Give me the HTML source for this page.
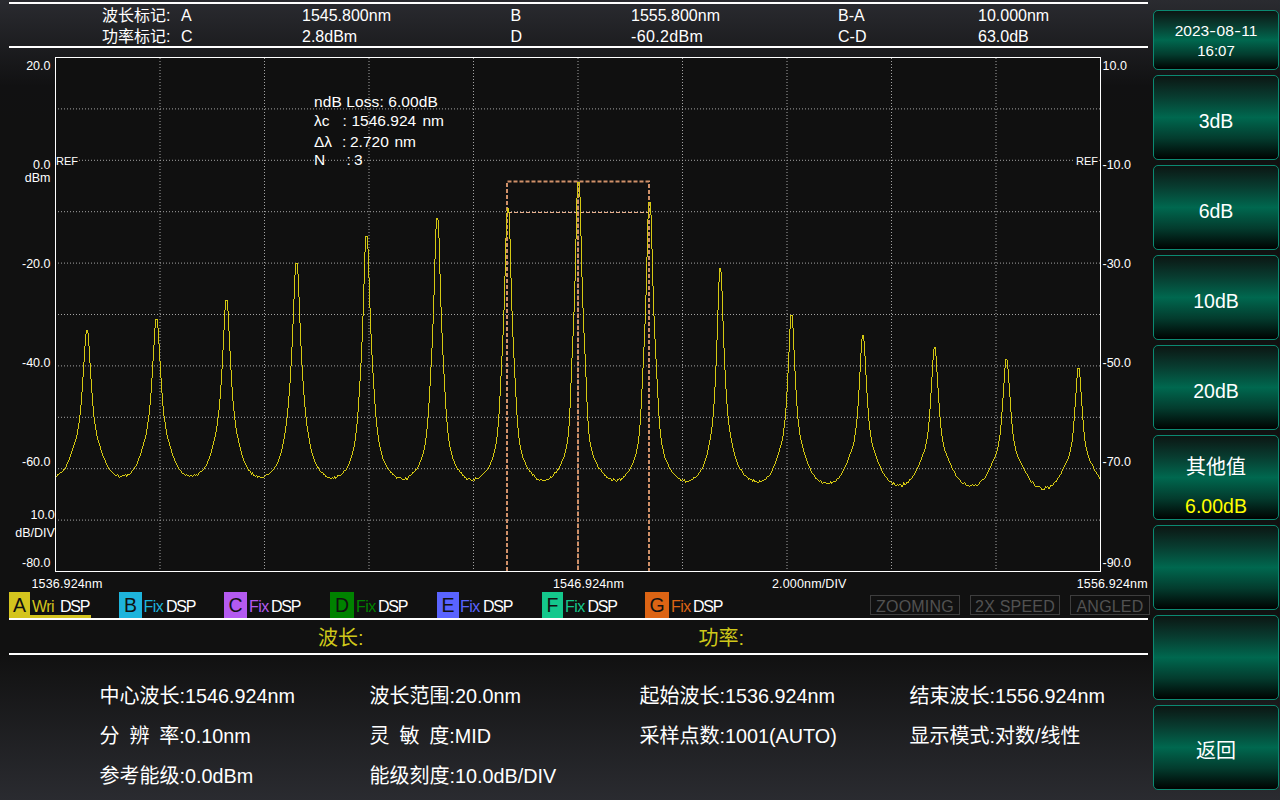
<!DOCTYPE html>
<html lang="zh"><head><meta charset="utf-8"><title>OSA</title>
<style>
html,body{margin:0;padding:0;}
body{width:1280px;height:800px;overflow:hidden;position:relative;background:#111;font-family:"Liberation Sans","Noto Sans CJK SC",sans-serif;color:#fff;}
#bg{position:absolute;left:0;top:0;width:1280px;height:800px;background:linear-gradient(to bottom,#2a2b30 0px,#111112 86px,#111 120px,#111 655px,#2a2b30 800px);}
.hl{position:absolute;left:9px;width:1139px;height:2px;background:#fff;}
.btn{position:absolute;left:1153px;width:124px;height:83px;border:1px solid #0b8a72;border-radius:5px;
 background:linear-gradient(to bottom,#0c1613 0%,#083c30 25%,#00684f 50%,#033c2e 75%,#000201 100%);}
.ch{position:absolute;top:592px;height:26px;}
.chl{position:absolute;top:592px;height:26px;font-size:19.5px;line-height:26px;color:#111;text-align:center;}
.hy{display:inline-block;transform:scaleX(1.3);margin:0 1.1px;}
.cj{font-size:20px;}
.st{position:absolute;top:595px;width:88px;height:18px;border:1px solid #3e3e3e;color:#525252;font-size:16px;line-height:21px;text-align:center;white-space:nowrap;letter-spacing:0.2px;}
</style></head><body>
<div id="bg"></div>
<div class="hl" style="top:2px"></div><div class="hl" style="top:46px"></div>
<div class="hl" style="top:618px"></div><div class="hl" style="top:653px"></div>
<div style="position:absolute;left:102px;top:8.06px;font-size:16px;line-height:1em;color:#fff;white-space:pre;">波长标记:</div>
<div style="position:absolute;left:181px;top:8.06px;font-size:16px;line-height:1em;color:#fff;white-space:pre;">A</div>
<div style="position:absolute;left:302px;top:8.06px;font-size:16px;line-height:1em;color:#fff;white-space:pre;">1545.800nm</div>
<div style="position:absolute;left:510.5px;top:8.06px;font-size:16px;line-height:1em;color:#fff;white-space:pre;">B</div>
<div style="position:absolute;left:631px;top:8.06px;font-size:16px;line-height:1em;color:#fff;white-space:pre;">1555.800nm</div>
<div style="position:absolute;left:838px;top:8.06px;font-size:16px;line-height:1em;color:#fff;white-space:pre;">B-A</div>
<div style="position:absolute;left:978px;top:8.06px;font-size:16px;line-height:1em;color:#fff;white-space:pre;">10.000nm</div>
<div style="position:absolute;left:102px;top:29.26px;font-size:16px;line-height:1em;color:#fff;white-space:pre;">功率标记:</div>
<div style="position:absolute;left:181px;top:29.26px;font-size:16px;line-height:1em;color:#fff;white-space:pre;">C</div>
<div style="position:absolute;left:302px;top:29.26px;font-size:16px;line-height:1em;color:#fff;white-space:pre;">2.8dBm</div>
<div style="position:absolute;left:510.5px;top:29.26px;font-size:16px;line-height:1em;color:#fff;white-space:pre;">D</div>
<div style="position:absolute;left:631px;top:29.26px;font-size:16px;line-height:1em;color:#fff;white-space:pre;letter-spacing:0.35px;">-60.2dBm</div>
<div style="position:absolute;left:838px;top:29.26px;font-size:16px;line-height:1em;color:#fff;white-space:pre;">C-D</div>
<div style="position:absolute;left:978px;top:29.26px;font-size:16px;line-height:1em;color:#fff;white-space:pre;">63.0dB</div>
<svg style="position:absolute;left:0;top:0" width="1280" height="800" viewBox="0 0 1280 800">
<rect x="55.5" y="57.5" width="1045" height="514" fill="#101010" stroke="none"/>
<line x1="160.0" y1="58" x2="160.0" y2="571" stroke="#a4a4a4" stroke-width="1" stroke-dasharray="1 2"/>
<line x1="264.5" y1="58" x2="264.5" y2="571" stroke="#a4a4a4" stroke-width="1" stroke-dasharray="1 2"/>
<line x1="369.0" y1="58" x2="369.0" y2="571" stroke="#a4a4a4" stroke-width="1" stroke-dasharray="1 2"/>
<line x1="473.5" y1="58" x2="473.5" y2="571" stroke="#a4a4a4" stroke-width="1" stroke-dasharray="1 2"/>
<line x1="578.0" y1="58" x2="578.0" y2="571" stroke="#a4a4a4" stroke-width="1" stroke-dasharray="1 2"/>
<line x1="682.5" y1="58" x2="682.5" y2="571" stroke="#a4a4a4" stroke-width="1" stroke-dasharray="1 2"/>
<line x1="787.0" y1="58" x2="787.0" y2="571" stroke="#a4a4a4" stroke-width="1" stroke-dasharray="1 2"/>
<line x1="891.5" y1="58" x2="891.5" y2="571" stroke="#a4a4a4" stroke-width="1" stroke-dasharray="1 2"/>
<line x1="996.0" y1="58" x2="996.0" y2="571" stroke="#a4a4a4" stroke-width="1" stroke-dasharray="1 2"/>
<line x1="55" y1="108.9" x2="1100" y2="108.9" stroke="#a4a4a4" stroke-width="1" stroke-dasharray="1 2"/>
<line x1="55" y1="160.3" x2="1100" y2="160.3" stroke="#a4a4a4" stroke-width="1" stroke-dasharray="1 2"/>
<line x1="55" y1="211.7" x2="1100" y2="211.7" stroke="#a4a4a4" stroke-width="1" stroke-dasharray="1 2"/>
<line x1="55" y1="263.1" x2="1100" y2="263.1" stroke="#a4a4a4" stroke-width="1" stroke-dasharray="1 2"/>
<line x1="55" y1="314.5" x2="1100" y2="314.5" stroke="#a4a4a4" stroke-width="1" stroke-dasharray="1 2"/>
<line x1="55" y1="365.9" x2="1100" y2="365.9" stroke="#a4a4a4" stroke-width="1" stroke-dasharray="1 2"/>
<line x1="55" y1="417.3" x2="1100" y2="417.3" stroke="#a4a4a4" stroke-width="1" stroke-dasharray="1 2"/>
<line x1="55" y1="468.7" x2="1100" y2="468.7" stroke="#a4a4a4" stroke-width="1" stroke-dasharray="1 2"/>
<line x1="55" y1="520.1" x2="1100" y2="520.1" stroke="#a4a4a4" stroke-width="1" stroke-dasharray="1 2"/>
<path d="M507 571 V181.5 H649 V571 M578 182 V571" fill="none" stroke="#cf9069" stroke-width="2" stroke-dasharray="4 2"/>
<line x1="508" y1="212.5" x2="648" y2="212.5" stroke="#eab08c" stroke-width="1" stroke-dasharray="4 2"/>
<path d="M56 476h1v1h-1zM57 474h1v2h-1zM58 474h1v1h-1zM59 473h1v1h-1zM60 472h1v1h-1zM61 472h1v1h-1zM62 471h1v1h-1zM63 469h1v2h-1zM64 469h1v1h-1zM65 467h1v2h-1zM66 464h1v3h-1zM67 462h1v2h-1zM68 460h1v2h-1zM69 457h1v3h-1zM70 454h1v3h-1zM71 451h1v3h-1zM72 448h1v3h-1zM73 445h1v3h-1zM74 442h1v3h-1zM75 439h1v3h-1zM76 435h1v4h-1zM77 429h1v6h-1zM78 423h1v6h-1zM79 415h1v8h-1zM80 405h1v10h-1zM81 392h1v13h-1zM82 377h1v15h-1zM83 362h1v15h-1zM84 346h1v16h-1zM85 334h1v12h-1zM86 330h1v4h-1zM87 330h1v3h-1zM88 333h1v13h-1zM89 346h1v17h-1zM90 363h1v16h-1zM91 379h1v14h-1zM92 393h1v13h-1zM93 406h1v11h-1zM94 417h1v7h-1zM95 424h1v6h-1zM96 430h1v6h-1zM97 436h1v4h-1zM98 440h1v3h-1zM99 443h1v3h-1zM100 446h1v4h-1zM101 450h1v3h-1zM102 453h1v3h-1zM103 456h1v2h-1zM104 458h1v2h-1zM105 460h1v3h-1zM106 463h1v2h-1zM107 465h1v2h-1zM108 467h1v2h-1zM109 469h1v1h-1zM110 470h1v1h-1zM111 471h1v1h-1zM112 472h1v1h-1zM113 473h1v1h-1zM114 474h1v1h-1zM115 475h1v1h-1zM116 475h1v1h-1zM117 474h1v1h-1zM118 475h1v2h-1zM119 477h1v1h-1zM120 476h1v1h-1zM121 476h1v1h-1zM122 475h1v1h-1zM123 475h1v1h-1zM124 475h1v1h-1zM125 474h1v1h-1zM126 475h1v2h-1zM127 474h1v2h-1zM128 474h1v1h-1zM129 474h1v1h-1zM130 473h1v1h-1zM131 471h1v2h-1zM132 470h1v1h-1zM133 469h1v1h-1zM134 467h1v2h-1zM135 466h1v1h-1zM136 464h1v2h-1zM137 461h1v3h-1zM138 458h1v3h-1zM139 456h1v2h-1zM140 453h1v3h-1zM141 449h1v4h-1zM142 446h1v3h-1zM143 442h1v4h-1zM144 439h1v3h-1zM145 435h1v4h-1zM146 429h1v6h-1zM147 422h1v7h-1zM148 415h1v7h-1zM149 405h1v10h-1zM150 393h1v12h-1zM151 378h1v15h-1zM152 361h1v17h-1zM153 345h1v16h-1zM154 328h1v17h-1zM155 319h1v9h-1zM156 319h1v1h-1zM157 319h1v9h-1zM158 328h1v16h-1zM159 344h1v17h-1zM160 361h1v17h-1zM161 378h1v15h-1zM162 393h1v13h-1zM163 406h1v10h-1zM164 416h1v6h-1zM165 422h1v7h-1zM166 429h1v6h-1zM167 435h1v4h-1zM168 439h1v3h-1zM169 442h1v4h-1zM170 446h1v3h-1zM171 449h1v4h-1zM172 453h1v3h-1zM173 456h1v2h-1zM174 458h1v3h-1zM175 461h1v2h-1zM176 463h1v2h-1zM177 465h1v2h-1zM178 467h1v2h-1zM179 469h1v1h-1zM180 470h1v1h-1zM181 471h1v2h-1zM182 473h1v1h-1zM183 473h1v1h-1zM184 474h1v1h-1zM185 475h1v1h-1zM186 474h1v1h-1zM187 475h1v1h-1zM188 475h1v1h-1zM189 476h1v1h-1zM190 475h1v1h-1zM191 475h1v1h-1zM192 476h1v1h-1zM193 475h1v1h-1zM194 474h1v1h-1zM195 475h1v1h-1zM196 474h1v1h-1zM197 475h1v1h-1zM198 473h1v2h-1zM199 472h1v1h-1zM200 471h1v1h-1zM201 471h1v1h-1zM202 470h1v1h-1zM203 469h1v1h-1zM204 467h1v2h-1zM205 466h1v1h-1zM206 464h1v2h-1zM207 461h1v3h-1zM208 459h1v2h-1zM209 456h1v3h-1zM210 453h1v3h-1zM211 449h1v4h-1zM212 445h1v4h-1zM213 441h1v4h-1zM214 437h1v4h-1zM215 432h1v5h-1zM216 426h1v6h-1zM217 418h1v8h-1zM218 410h1v8h-1zM219 399h1v11h-1zM220 385h1v14h-1zM221 369h1v16h-1zM222 350h1v19h-1zM223 330h1v20h-1zM224 310h1v20h-1zM225 300h1v10h-1zM226 300h1v1h-1zM227 300h1v11h-1zM228 311h1v20h-1zM229 331h1v20h-1zM230 351h1v19h-1zM231 370h1v17h-1zM232 387h1v14h-1zM233 401h1v10h-1zM234 411h1v9h-1zM235 420h1v8h-1zM236 428h1v6h-1zM237 434h1v4h-1zM238 438h1v5h-1zM239 443h1v4h-1zM240 447h1v4h-1zM241 451h1v4h-1zM242 455h1v3h-1zM243 458h1v3h-1zM244 461h1v2h-1zM245 463h1v2h-1zM246 465h1v2h-1zM247 467h1v2h-1zM248 469h1v2h-1zM249 470h1v1h-1zM250 471h1v2h-1zM251 473h1v2h-1zM252 472h1v2h-1zM253 474h1v2h-1zM254 475h1v1h-1zM255 476h1v1h-1zM256 475h1v1h-1zM257 476h1v2h-1zM258 476h1v1h-1zM259 476h1v1h-1zM260 477h1v1h-1zM261 477h1v1h-1zM262 477h1v1h-1zM263 477h1v1h-1zM264 476h1v1h-1zM265 475h1v1h-1zM266 474h1v1h-1zM267 474h1v1h-1zM268 474h1v1h-1zM269 473h1v1h-1zM270 472h1v1h-1zM271 471h1v1h-1zM272 470h1v1h-1zM273 469h1v1h-1zM274 467h1v2h-1zM275 466h1v1h-1zM276 464h1v2h-1zM277 462h1v2h-1zM278 459h1v3h-1zM279 456h1v3h-1zM280 453h1v3h-1zM281 449h1v4h-1zM282 444h1v5h-1zM283 439h1v5h-1zM284 433h1v6h-1zM285 426h1v7h-1zM286 418h1v8h-1zM287 408h1v10h-1zM288 396h1v12h-1zM289 383h1v13h-1zM290 366h1v17h-1zM291 347h1v19h-1zM292 324h1v23h-1zM293 299h1v25h-1zM294 275h1v24h-1zM295 263h1v12h-1zM296 263h1v1h-1zM297 263h1v11h-1zM298 274h1v23h-1zM299 297h1v26h-1zM300 323h1v23h-1zM301 346h1v19h-1zM302 365h1v16h-1zM303 381h1v14h-1zM304 395h1v12h-1zM305 407h1v10h-1zM306 417h1v9h-1zM307 426h1v6h-1zM308 432h1v6h-1zM309 438h1v6h-1zM310 444h1v5h-1zM311 449h1v4h-1zM312 453h1v3h-1zM313 456h1v3h-1zM314 459h1v3h-1zM315 462h1v2h-1zM316 464h1v2h-1zM317 466h1v2h-1zM318 467h1v2h-1zM319 469h1v2h-1zM320 471h1v1h-1zM321 472h1v1h-1zM322 472h1v1h-1zM323 473h1v2h-1zM324 474h1v1h-1zM325 475h1v2h-1zM326 476h1v1h-1zM327 477h1v1h-1zM328 477h1v1h-1zM329 477h1v1h-1zM330 478h1v1h-1zM331 478h1v1h-1zM332 477h1v1h-1zM333 478h1v1h-1zM334 476h1v2h-1zM335 477h1v2h-1zM336 477h1v1h-1zM337 475h1v2h-1zM338 475h1v1h-1zM339 475h1v1h-1zM340 475h1v1h-1zM341 474h1v1h-1zM342 473h1v1h-1zM343 471h1v2h-1zM344 470h1v1h-1zM345 470h1v1h-1zM346 468h1v2h-1zM347 466h1v2h-1zM348 464h1v2h-1zM349 461h1v3h-1zM350 458h1v3h-1zM351 455h1v3h-1zM352 451h1v4h-1zM353 447h1v4h-1zM354 441h1v6h-1zM355 433h1v8h-1zM356 424h1v9h-1zM357 412h1v12h-1zM358 397h1v15h-1zM359 381h1v16h-1zM360 363h1v18h-1zM361 342h1v21h-1zM362 316h1v26h-1zM363 284h1v32h-1zM364 252h1v32h-1zM365 236h1v16h-1zM366 236h1v1h-1zM367 236h1v13h-1zM368 249h1v29h-1zM369 278h1v30h-1zM370 308h1v26h-1zM371 334h1v21h-1zM372 355h1v18h-1zM373 373h1v16h-1zM374 389h1v15h-1zM375 404h1v13h-1zM376 417h1v10h-1zM377 427h1v8h-1zM378 435h1v7h-1zM379 442h1v5h-1zM380 447h1v4h-1zM381 451h1v4h-1zM382 455h1v4h-1zM383 459h1v2h-1zM384 461h1v2h-1zM385 463h1v2h-1zM386 465h1v2h-1zM387 467h1v2h-1zM388 469h1v1h-1zM389 470h1v1h-1zM390 471h1v2h-1zM391 472h1v1h-1zM392 473h1v2h-1zM393 474h1v1h-1zM394 475h1v1h-1zM395 476h1v1h-1zM396 477h1v2h-1zM397 477h1v1h-1zM398 477h1v1h-1zM399 477h1v1h-1zM400 477h1v1h-1zM401 478h1v1h-1zM402 479h1v1h-1zM403 479h1v1h-1zM404 479h1v1h-1zM405 477h1v2h-1zM406 478h1v2h-1zM407 478h1v2h-1zM408 476h1v2h-1zM409 475h1v1h-1zM410 475h1v1h-1zM411 474h1v1h-1zM412 472h1v2h-1zM413 472h1v1h-1zM414 471h1v1h-1zM415 469h1v2h-1zM416 469h1v1h-1zM417 467h1v2h-1zM418 465h1v2h-1zM419 462h1v3h-1zM420 460h1v2h-1zM421 457h1v3h-1zM422 454h1v3h-1zM423 450h1v4h-1zM424 445h1v5h-1zM425 438h1v7h-1zM426 429h1v9h-1zM427 418h1v11h-1zM428 403h1v15h-1zM429 386h1v17h-1zM430 367h1v19h-1zM431 348h1v19h-1zM432 324h1v24h-1zM433 295h1v29h-1zM434 259h1v36h-1zM435 229h1v30h-1zM436 218h1v11h-1zM437 218h1v2h-1zM438 220h1v18h-1zM439 238h1v36h-1zM440 274h1v33h-1zM441 307h1v26h-1zM442 333h1v22h-1zM443 355h1v19h-1zM444 374h1v18h-1zM445 392h1v17h-1zM446 409h1v13h-1zM447 422h1v11h-1zM448 433h1v8h-1zM449 441h1v6h-1zM450 447h1v4h-1zM451 451h1v4h-1zM452 455h1v4h-1zM453 459h1v2h-1zM454 461h1v3h-1zM455 464h1v2h-1zM456 466h1v2h-1zM457 468h1v2h-1zM458 469h1v1h-1zM459 470h1v2h-1zM460 472h1v1h-1zM461 472h1v2h-1zM462 474h1v2h-1zM463 475h1v1h-1zM464 476h1v2h-1zM465 477h1v1h-1zM466 478h1v2h-1zM467 479h1v1h-1zM468 478h1v1h-1zM469 478h1v1h-1zM470 479h1v1h-1zM471 480h1v1h-1zM472 480h1v1h-1zM473 479h1v1h-1zM474 479h1v2h-1zM475 477h1v2h-1zM476 478h1v1h-1zM477 478h1v1h-1zM478 478h1v1h-1zM479 477h1v1h-1zM480 476h1v1h-1zM481 475h1v1h-1zM482 474h1v1h-1zM483 473h1v1h-1zM484 472h1v1h-1zM485 471h1v1h-1zM486 470h1v1h-1zM487 469h1v1h-1zM488 467h1v2h-1zM489 465h1v2h-1zM490 462h1v3h-1zM491 460h1v2h-1zM492 457h1v3h-1zM493 453h1v4h-1zM494 449h1v4h-1zM495 444h1v5h-1zM496 437h1v7h-1zM497 427h1v10h-1zM498 414h1v13h-1zM499 396h1v18h-1zM500 376h1v20h-1zM501 356h1v20h-1zM502 335h1v21h-1zM503 310h1v25h-1zM504 276h1v34h-1zM505 238h1v38h-1zM506 213h1v25h-1zM507 208h1v5h-1zM508 208h1v5h-1zM509 213h1v26h-1zM510 239h1v39h-1zM511 278h1v33h-1zM512 311h1v26h-1zM513 337h1v21h-1zM514 358h1v20h-1zM515 378h1v19h-1zM516 397h1v18h-1zM517 415h1v13h-1zM518 428h1v10h-1zM519 438h1v7h-1zM520 445h1v5h-1zM521 450h1v4h-1zM522 454h1v4h-1zM523 458h1v2h-1zM524 460h1v2h-1zM525 462h1v3h-1zM526 465h1v2h-1zM527 467h1v2h-1zM528 469h1v1h-1zM529 470h1v2h-1zM530 471h1v1h-1zM531 472h1v2h-1zM532 474h1v2h-1zM533 474h1v1h-1zM534 475h1v2h-1zM535 477h1v1h-1zM536 478h1v2h-1zM537 479h1v1h-1zM538 479h1v1h-1zM539 480h1v1h-1zM540 479h1v1h-1zM541 479h1v1h-1zM542 480h1v1h-1zM543 480h1v1h-1zM544 480h1v1h-1zM545 480h1v1h-1zM546 479h1v1h-1zM547 479h1v1h-1zM548 479h1v1h-1zM549 478h1v1h-1zM550 476h1v2h-1zM551 477h1v1h-1zM552 476h1v1h-1zM553 474h1v2h-1zM554 472h1v2h-1zM555 472h1v1h-1zM556 471h1v2h-1zM557 469h1v2h-1zM558 468h1v2h-1zM559 466h1v2h-1zM560 464h1v2h-1zM561 461h1v3h-1zM562 459h1v2h-1zM563 457h1v2h-1zM564 453h1v4h-1zM565 449h1v4h-1zM566 444h1v5h-1zM567 437h1v7h-1zM568 426h1v11h-1zM569 408h1v18h-1zM570 383h1v25h-1zM571 358h1v25h-1zM572 336h1v22h-1zM573 312h1v24h-1zM574 281h1v31h-1zM575 239h1v42h-1zM576 198h1v41h-1zM577 182h1v16h-1zM578 182h1v1h-1zM579 182h1v15h-1zM580 197h1v39h-1zM581 236h1v41h-1zM582 277h1v31h-1zM583 308h1v25h-1zM584 333h1v21h-1zM585 354h1v23h-1zM586 377h1v25h-1zM587 402h1v19h-1zM588 421h1v13h-1zM589 434h1v8h-1zM590 442h1v5h-1zM591 447h1v4h-1zM592 451h1v4h-1zM593 455h1v3h-1zM594 458h1v2h-1zM595 460h1v2h-1zM596 462h1v2h-1zM597 464h1v3h-1zM598 467h1v2h-1zM599 468h1v1h-1zM600 469h1v1h-1zM601 470h1v2h-1zM602 472h1v1h-1zM603 473h1v1h-1zM604 474h1v2h-1zM605 475h1v1h-1zM606 476h1v2h-1zM607 477h1v1h-1zM608 478h1v1h-1zM609 478h1v1h-1zM610 478h1v1h-1zM611 479h1v2h-1zM612 480h1v1h-1zM613 478h1v2h-1zM614 479h1v1h-1zM615 480h1v1h-1zM616 481h1v1h-1zM617 479h1v2h-1zM618 479h1v1h-1zM619 478h1v1h-1zM620 479h1v2h-1zM621 478h1v2h-1zM622 478h1v1h-1zM623 476h1v2h-1zM624 476h1v1h-1zM625 474h1v2h-1zM626 473h1v1h-1zM627 472h1v1h-1zM628 471h1v1h-1zM629 469h1v2h-1zM630 467h1v2h-1zM631 465h1v2h-1zM632 463h1v2h-1zM633 460h1v3h-1zM634 457h1v3h-1zM635 454h1v3h-1zM636 449h1v5h-1zM637 444h1v5h-1zM638 436h1v8h-1zM639 425h1v11h-1zM640 409h1v16h-1zM641 389h1v20h-1zM642 368h1v21h-1zM643 347h1v21h-1zM644 324h1v23h-1zM645 295h1v29h-1zM646 257h1v38h-1zM647 219h1v38h-1zM648 202h1v17h-1zM649 202h1v1h-1zM650 202h1v13h-1zM651 215h1v34h-1zM652 249h1v37h-1zM653 286h1v30h-1zM654 316h1v23h-1zM655 339h1v20h-1zM656 359h1v20h-1zM657 379h1v19h-1zM658 398h1v18h-1zM659 416h1v13h-1zM660 429h1v9h-1zM661 438h1v7h-1zM662 445h1v4h-1zM663 449h1v5h-1zM664 454h1v4h-1zM665 458h1v2h-1zM666 460h1v2h-1zM667 462h1v2h-1zM668 464h1v3h-1zM669 467h1v2h-1zM670 469h1v1h-1zM671 470h1v2h-1zM672 472h1v1h-1zM673 473h1v1h-1zM674 474h1v1h-1zM675 475h1v1h-1zM676 476h1v1h-1zM677 477h1v1h-1zM678 478h1v1h-1zM679 478h1v1h-1zM680 479h1v2h-1zM681 480h1v1h-1zM682 479h1v1h-1zM683 480h1v1h-1zM684 479h1v2h-1zM685 481h1v2h-1zM686 481h1v1h-1zM687 481h1v1h-1zM688 481h1v1h-1zM689 480h1v1h-1zM690 480h1v1h-1zM691 479h1v1h-1zM692 479h1v1h-1zM693 477h1v2h-1zM694 477h1v1h-1zM695 477h1v1h-1zM696 476h1v1h-1zM697 475h1v1h-1zM698 473h1v2h-1zM699 472h1v1h-1zM700 470h1v2h-1zM701 469h1v1h-1zM702 467h1v2h-1zM703 464h1v3h-1zM704 461h1v3h-1zM705 458h1v3h-1zM706 455h1v3h-1zM707 450h1v5h-1zM708 445h1v5h-1zM709 440h1v5h-1zM710 434h1v6h-1zM711 427h1v7h-1zM712 417h1v10h-1zM713 404h1v13h-1zM714 387h1v17h-1zM715 366h1v21h-1zM716 340h1v26h-1zM717 310h1v30h-1zM718 282h1v28h-1zM719 268h1v14h-1zM720 268h1v4h-1zM721 272h1v19h-1zM722 291h1v30h-1zM723 321h1v27h-1zM724 348h1v22h-1zM725 370h1v19h-1zM726 389h1v15h-1zM727 404h1v12h-1zM728 416h1v9h-1zM729 425h1v7h-1zM730 432h1v6h-1zM731 438h1v5h-1zM732 443h1v5h-1zM733 448h1v4h-1zM734 452h1v4h-1zM735 456h1v3h-1zM736 459h1v3h-1zM737 462h1v3h-1zM738 465h1v2h-1zM739 467h1v2h-1zM740 469h1v1h-1zM741 469h1v2h-1zM742 471h1v2h-1zM743 473h1v2h-1zM744 475h1v1h-1zM745 475h1v1h-1zM746 476h1v1h-1zM747 477h1v1h-1zM748 478h1v2h-1zM749 478h1v1h-1zM750 479h1v1h-1zM751 479h1v1h-1zM752 480h1v2h-1zM753 479h1v2h-1zM754 480h1v2h-1zM755 481h1v1h-1zM756 481h1v1h-1zM757 482h1v1h-1zM758 482h1v1h-1zM759 480h1v2h-1zM760 481h1v1h-1zM761 481h1v1h-1zM762 480h1v1h-1zM763 480h1v1h-1zM764 479h1v1h-1zM765 479h1v1h-1zM766 477h1v2h-1zM767 476h1v1h-1zM768 476h1v1h-1zM769 475h1v1h-1zM770 473h1v2h-1zM771 471h1v2h-1zM772 468h1v3h-1zM773 466h1v2h-1zM774 464h1v2h-1zM775 461h1v3h-1zM776 458h1v3h-1zM777 455h1v3h-1zM778 452h1v3h-1zM779 448h1v4h-1zM780 445h1v3h-1zM781 441h1v4h-1zM782 436h1v5h-1zM783 428h1v8h-1zM784 420h1v8h-1zM785 408h1v12h-1zM786 392h1v16h-1zM787 373h1v19h-1zM788 352h1v21h-1zM789 329h1v23h-1zM790 315h1v14h-1zM791 315h1v1h-1zM792 315h1v13h-1zM793 328h1v22h-1zM794 350h1v21h-1zM795 371h1v19h-1zM796 390h1v16h-1zM797 406h1v13h-1zM798 419h1v8h-1zM799 427h1v8h-1zM800 435h1v5h-1zM801 440h1v4h-1zM802 444h1v4h-1zM803 448h1v4h-1zM804 452h1v3h-1zM805 455h1v3h-1zM806 458h1v3h-1zM807 461h1v3h-1zM808 464h1v2h-1zM809 466h1v2h-1zM810 468h1v3h-1zM811 471h1v2h-1zM812 473h1v1h-1zM813 474h1v1h-1zM814 475h1v2h-1zM815 477h1v2h-1zM816 478h1v1h-1zM817 479h1v1h-1zM818 480h1v1h-1zM819 481h1v1h-1zM820 480h1v1h-1zM821 481h1v2h-1zM822 483h1v1h-1zM823 482h1v1h-1zM824 482h1v1h-1zM825 482h1v1h-1zM826 483h1v1h-1zM827 483h1v1h-1zM828 483h1v1h-1zM829 483h1v1h-1zM830 481h1v2h-1zM831 482h1v2h-1zM832 482h1v1h-1zM833 481h1v1h-1zM834 481h1v1h-1zM835 481h1v1h-1zM836 479h1v2h-1zM837 478h1v1h-1zM838 478h1v1h-1zM839 476h1v2h-1zM840 475h1v1h-1zM841 473h1v2h-1zM842 471h1v2h-1zM843 469h1v2h-1zM844 467h1v2h-1zM845 465h1v2h-1zM846 463h1v2h-1zM847 460h1v3h-1zM848 457h1v3h-1zM849 454h1v3h-1zM850 452h1v2h-1zM851 449h1v3h-1zM852 446h1v3h-1zM853 442h1v4h-1zM854 435h1v7h-1zM855 428h1v7h-1zM856 419h1v9h-1zM857 406h1v13h-1zM858 390h1v16h-1zM859 372h1v18h-1zM860 353h1v19h-1zM861 339h1v14h-1zM862 335h1v4h-1zM863 335h1v6h-1zM864 341h1v15h-1zM865 356h1v19h-1zM866 375h1v18h-1zM867 393h1v15h-1zM868 408h1v13h-1zM869 421h1v9h-1zM870 430h1v7h-1zM871 437h1v6h-1zM872 443h1v4h-1zM873 447h1v3h-1zM874 450h1v3h-1zM875 453h1v3h-1zM876 456h1v3h-1zM877 459h1v3h-1zM878 462h1v2h-1zM879 464h1v2h-1zM880 466h1v2h-1zM881 468h1v3h-1zM882 471h1v2h-1zM883 473h1v1h-1zM884 474h1v2h-1zM885 476h1v1h-1zM886 477h1v1h-1zM887 478h1v2h-1zM888 480h1v1h-1zM889 481h1v1h-1zM890 481h1v1h-1zM891 482h1v1h-1zM892 483h1v2h-1zM893 482h1v2h-1zM894 483h1v2h-1zM895 485h1v1h-1zM896 485h1v1h-1zM897 484h1v1h-1zM898 485h1v1h-1zM899 484h1v1h-1zM900 484h1v1h-1zM901 485h1v2h-1zM902 485h1v2h-1zM903 482h1v3h-1zM904 483h1v2h-1zM905 484h1v1h-1zM906 482h1v2h-1zM907 482h1v1h-1zM908 481h1v2h-1zM909 479h1v2h-1zM910 479h1v1h-1zM911 478h1v1h-1zM912 476h1v2h-1zM913 475h1v1h-1zM914 473h1v2h-1zM915 471h1v2h-1zM916 469h1v2h-1zM917 467h1v2h-1zM918 465h1v2h-1zM919 462h1v3h-1zM920 460h1v2h-1zM921 457h1v3h-1zM922 454h1v3h-1zM923 452h1v2h-1zM924 449h1v3h-1zM925 444h1v5h-1zM926 439h1v5h-1zM927 432h1v7h-1zM928 422h1v10h-1zM929 409h1v13h-1zM930 393h1v16h-1zM931 377h1v16h-1zM932 360h1v17h-1zM933 349h1v11h-1zM934 347h1v2h-1zM935 347h1v9h-1zM936 356h1v16h-1zM937 372h1v16h-1zM938 388h1v15h-1zM939 403h1v14h-1zM940 417h1v11h-1zM941 428h1v8h-1zM942 436h1v6h-1zM943 442h1v5h-1zM944 447h1v4h-1zM945 451h1v2h-1zM946 453h1v3h-1zM947 456h1v2h-1zM948 458h1v3h-1zM949 461h1v2h-1zM950 463h1v2h-1zM951 465h1v3h-1zM952 468h1v2h-1zM953 470h1v1h-1zM954 471h1v2h-1zM955 473h1v3h-1zM956 476h1v1h-1zM957 477h1v1h-1zM958 478h1v1h-1zM959 479h1v1h-1zM960 480h1v2h-1zM961 482h1v1h-1zM962 483h1v1h-1zM963 483h1v1h-1zM964 482h1v1h-1zM965 483h1v2h-1zM966 485h1v1h-1zM967 485h1v1h-1zM968 485h1v1h-1zM969 486h1v1h-1zM970 485h1v1h-1zM971 485h1v1h-1zM972 484h1v1h-1zM973 485h1v1h-1zM974 485h1v1h-1zM975 484h1v1h-1zM976 485h1v1h-1zM977 485h1v1h-1zM978 484h1v1h-1zM979 482h1v2h-1zM980 481h1v1h-1zM981 480h1v1h-1zM982 479h1v1h-1zM983 479h1v1h-1zM984 478h1v1h-1zM985 476h1v2h-1zM986 474h1v2h-1zM987 472h1v2h-1zM988 470h1v2h-1zM989 468h1v2h-1zM990 466h1v2h-1zM991 463h1v3h-1zM992 461h1v2h-1zM993 459h1v2h-1zM994 457h1v2h-1zM995 454h1v3h-1zM996 451h1v3h-1zM997 447h1v4h-1zM998 441h1v6h-1zM999 435h1v6h-1zM1000 425h1v10h-1zM1001 412h1v13h-1zM1002 398h1v14h-1zM1003 383h1v15h-1zM1004 368h1v15h-1zM1005 359h1v9h-1zM1006 359h1v1h-1zM1007 360h1v9h-1zM1008 369h1v14h-1zM1009 383h1v14h-1zM1010 397h1v15h-1zM1011 412h1v12h-1zM1012 424h1v10h-1zM1013 434h1v7h-1zM1014 441h1v5h-1zM1015 446h1v5h-1zM1016 451h1v3h-1zM1017 454h1v3h-1zM1018 457h1v2h-1zM1019 459h1v2h-1zM1020 461h1v2h-1zM1021 463h1v2h-1zM1022 465h1v2h-1zM1023 467h1v2h-1zM1024 469h1v2h-1zM1025 471h1v2h-1zM1026 473h1v1h-1zM1027 474h1v2h-1zM1028 476h1v2h-1zM1029 478h1v2h-1zM1030 480h1v2h-1zM1031 482h1v1h-1zM1032 481h1v1h-1zM1033 482h1v2h-1zM1034 484h1v2h-1zM1035 486h1v1h-1zM1036 486h1v1h-1zM1037 486h1v1h-1zM1038 486h1v1h-1zM1039 486h1v1h-1zM1040 487h1v1h-1zM1041 488h1v2h-1zM1042 489h1v1h-1zM1043 489h1v1h-1zM1044 488h1v2h-1zM1045 486h1v2h-1zM1046 487h1v1h-1zM1047 486h1v1h-1zM1048 487h1v2h-1zM1049 487h1v2h-1zM1050 485h1v2h-1zM1051 485h1v1h-1zM1052 485h1v1h-1zM1053 483h1v2h-1zM1054 482h1v1h-1zM1055 481h1v1h-1zM1056 480h1v2h-1zM1057 478h1v2h-1zM1058 477h1v1h-1zM1059 475h1v2h-1zM1060 474h1v1h-1zM1061 471h1v3h-1zM1062 469h1v2h-1zM1063 467h1v2h-1zM1064 465h1v2h-1zM1065 463h1v2h-1zM1066 461h1v2h-1zM1067 459h1v2h-1zM1068 456h1v3h-1zM1069 452h1v4h-1zM1070 447h1v5h-1zM1071 442h1v5h-1zM1072 433h1v9h-1zM1073 421h1v12h-1zM1074 407h1v14h-1zM1075 393h1v14h-1zM1076 378h1v15h-1zM1077 368h1v10h-1zM1078 368h1v1h-1zM1079 368h1v9h-1zM1080 377h1v15h-1zM1081 392h1v14h-1zM1082 406h1v14h-1zM1083 420h1v12h-1zM1084 432h1v9h-1zM1085 441h1v6h-1zM1086 447h1v4h-1zM1087 451h1v4h-1zM1088 455h1v3h-1zM1089 458h1v3h-1zM1090 461h1v2h-1zM1091 463h1v1h-1zM1092 464h1v2h-1zM1093 466h1v3h-1zM1094 469h1v2h-1zM1095 471h1v1h-1zM1096 472h1v2h-1zM1097 474h1v1h-1zM1098 475h1v2h-1zM1099 477h1v2h-1zM1100 479h1v1h-1z" fill="#d4c812" stroke="none" shape-rendering="crispEdges"/>
<rect x="55.5" y="57.5" width="1045" height="514" fill="none" stroke="#fff" stroke-width="1"/>
</svg>
<div style="position:absolute;right:1229.5px;top:59.62px;font-size:12.5px;line-height:1em;color:#fff;white-space:pre;">20.0</div>
<div style="position:absolute;right:1229.5px;top:158.62px;font-size:12.5px;line-height:1em;color:#fff;white-space:pre;">0.0</div>
<div style="position:absolute;right:1229.5px;top:257.92px;font-size:12.5px;line-height:1em;color:#fff;white-space:pre;">-20.0</div>
<div style="position:absolute;right:1229.5px;top:356.82px;font-size:12.5px;line-height:1em;color:#fff;white-space:pre;">-40.0</div>
<div style="position:absolute;right:1229.5px;top:456.02px;font-size:12.5px;line-height:1em;color:#fff;white-space:pre;">-60.0</div>
<div style="position:absolute;right:1229.5px;top:556.62px;font-size:12.5px;line-height:1em;color:#fff;white-space:pre;">-80.0</div>
<div style="position:absolute;right:1229.5px;top:171.62px;font-size:12.5px;line-height:1em;color:#fff;white-space:pre;">dBm</div>
<div style="position:absolute;right:1225.2px;top:508.82px;font-size:12.5px;line-height:1em;color:#fff;white-space:pre;">10.0</div>
<div style="position:absolute;right:1225.2px;top:526.92px;font-size:12.5px;line-height:1em;color:#fff;white-space:pre;">dB/DIV</div>
<div style="position:absolute;left:1102.5px;top:59.82px;font-size:12.5px;line-height:1em;color:#fff;white-space:pre;">10.0</div>
<div style="position:absolute;left:1102.5px;top:158.72px;font-size:12.5px;line-height:1em;color:#fff;white-space:pre;">-10.0</div>
<div style="position:absolute;left:1102.5px;top:257.92px;font-size:12.5px;line-height:1em;color:#fff;white-space:pre;">-30.0</div>
<div style="position:absolute;left:1102.5px;top:356.82px;font-size:12.5px;line-height:1em;color:#fff;white-space:pre;">-50.0</div>
<div style="position:absolute;left:1102.5px;top:456.02px;font-size:12.5px;line-height:1em;color:#fff;white-space:pre;">-70.0</div>
<div style="position:absolute;left:1102.5px;top:556.62px;font-size:12.5px;line-height:1em;color:#fff;white-space:pre;">-90.0</div>
<div style="position:absolute;left:56px;top:156.09px;font-size:11px;line-height:1em;color:#fff;white-space:pre;background:#111;padding-right:1px;">REF</div>
<div style="position:absolute;right:181px;top:156.09px;font-size:11px;line-height:1em;color:#fff;white-space:pre;background:#111;padding:0 1px;">REF</div>
<div style="position:absolute;left:31.5px;top:578.02px;font-size:12.5px;line-height:1em;color:#fff;white-space:pre;letter-spacing:0.15px;">1536.924nm</div>
<div style="position:absolute;left:553px;top:578.02px;font-size:12.5px;line-height:1em;color:#fff;white-space:pre;letter-spacing:0.15px;">1546.924nm</div>
<div style="position:absolute;left:772px;top:578.02px;font-size:12.5px;line-height:1em;color:#fff;white-space:pre;letter-spacing:0.15px;">2.000nm/DIV</div>
<div style="position:absolute;right:132.29999999999995px;top:578.02px;font-size:12.5px;line-height:1em;color:#fff;white-space:pre;letter-spacing:0.15px;">1556.924nm</div>
<div style="position:absolute;left:314px;top:94.38px;font-size:15.5px;line-height:1em;color:#fff;white-space:pre;letter-spacing:0.1px;">ndB Loss: 6.00dB</div>
<div style="position:absolute;left:314px;top:113.48px;font-size:15.5px;line-height:1em;color:#fff;white-space:pre;">λc</div>
<div style="position:absolute;left:342.5px;top:113.48px;font-size:15.5px;line-height:1em;color:#fff;white-space:pre;">:</div>
<div style="position:absolute;left:351.5px;top:113.48px;font-size:15.5px;line-height:1em;color:#fff;white-space:pre;">1546.924</div>
<div style="position:absolute;left:422.5px;top:113.48px;font-size:15.5px;line-height:1em;color:#fff;white-space:pre;">nm</div>
<div style="position:absolute;left:314px;top:134.38px;font-size:15.5px;line-height:1em;color:#fff;white-space:pre;">Δλ</div>
<div style="position:absolute;left:342px;top:134.38px;font-size:15.5px;line-height:1em;color:#fff;white-space:pre;">:</div>
<div style="position:absolute;left:350px;top:134.38px;font-size:15.5px;line-height:1em;color:#fff;white-space:pre;">2.720</div>
<div style="position:absolute;left:394.5px;top:134.38px;font-size:15.5px;line-height:1em;color:#fff;white-space:pre;">nm</div>
<div style="position:absolute;left:314px;top:152.08px;font-size:15.5px;line-height:1em;color:#fff;white-space:pre;">N</div>
<div style="position:absolute;left:346.5px;top:152.08px;font-size:15.5px;line-height:1em;color:#fff;white-space:pre;">:</div>
<div style="position:absolute;left:354px;top:152.08px;font-size:15.5px;line-height:1em;color:#fff;white-space:pre;">3</div>
<div class="ch" style="left:9px;width:21px;background:#d4c41e"></div><div class="chl" style="left:9px;width:21px">A</div>
<div style="position:absolute;left:32px;top:598.86px;font-size:16px;line-height:1em;color:#d4c41e;white-space:pre;letter-spacing:-0.6px;">Wri</div>
<div style="position:absolute;left:60px;top:598.86px;font-size:16px;line-height:1em;color:#fff;white-space:pre;letter-spacing:-1.3px;">DSP</div>
<div class="ch" style="left:119px;width:23px;background:#1eb4dc"></div><div class="chl" style="left:119px;width:23px">B</div>
<div style="position:absolute;left:143.5px;top:598.86px;font-size:16px;line-height:1em;color:#1eb4dc;white-space:pre;letter-spacing:-0.6px;">Fix</div>
<div style="position:absolute;left:166px;top:598.86px;font-size:16px;line-height:1em;color:#fff;white-space:pre;letter-spacing:-1.3px;">DSP</div>
<div class="ch" style="left:224px;width:23px;background:#b45af0"></div><div class="chl" style="left:224px;width:23px">C</div>
<div style="position:absolute;left:249px;top:598.86px;font-size:16px;line-height:1em;color:#b45af0;white-space:pre;letter-spacing:-0.6px;">Fix</div>
<div style="position:absolute;left:271px;top:598.86px;font-size:16px;line-height:1em;color:#fff;white-space:pre;letter-spacing:-1.3px;">DSP</div>
<div class="ch" style="left:330px;width:24px;background:#008200"></div><div class="chl" style="left:330px;width:24px">D</div>
<div style="position:absolute;left:356px;top:598.86px;font-size:16px;line-height:1em;color:#008200;white-space:pre;letter-spacing:-0.6px;">Fix</div>
<div style="position:absolute;left:378px;top:598.86px;font-size:16px;line-height:1em;color:#fff;white-space:pre;letter-spacing:-1.3px;">DSP</div>
<div class="ch" style="left:437px;width:22px;background:#5a64ff"></div><div class="chl" style="left:437px;width:22px">E</div>
<div style="position:absolute;left:460px;top:598.86px;font-size:16px;line-height:1em;color:#5a64ff;white-space:pre;letter-spacing:-0.6px;">Fix</div>
<div style="position:absolute;left:483px;top:598.86px;font-size:16px;line-height:1em;color:#fff;white-space:pre;letter-spacing:-1.3px;">DSP</div>
<div class="ch" style="left:542px;width:21px;background:#14c88c"></div><div class="chl" style="left:542px;width:21px">F</div>
<div style="position:absolute;left:565px;top:598.86px;font-size:16px;line-height:1em;color:#14c88c;white-space:pre;letter-spacing:-0.6px;">Fix</div>
<div style="position:absolute;left:587.5px;top:598.86px;font-size:16px;line-height:1em;color:#fff;white-space:pre;letter-spacing:-1.3px;">DSP</div>
<div class="ch" style="left:645px;width:24px;background:#dc6414"></div><div class="chl" style="left:645px;width:24px">G</div>
<div style="position:absolute;left:671px;top:598.86px;font-size:16px;line-height:1em;color:#dc6414;white-space:pre;letter-spacing:-0.6px;">Fix</div>
<div style="position:absolute;left:693px;top:598.86px;font-size:16px;line-height:1em;color:#fff;white-space:pre;letter-spacing:-1.3px;">DSP</div>
<div style="position:absolute;left:30px;top:615px;width:61px;height:3px;background:#d4c41e"></div>
<div class="st" style="left:870px;width:88px">ZOOMING</div>
<div class="st" style="left:970px;width:88px">2X SPEED</div>
<div class="st" style="left:1070px;width:78px">ANGLED</div>
<div style="position:absolute;left:318px;top:628.17px;font-size:20px;line-height:1em;color:#cfc81a;white-space:pre;">波长:</div>
<div style="position:absolute;left:698.5px;top:628.17px;font-size:20px;line-height:1em;color:#cfc81a;white-space:pre;">功率:</div>
<div style="position:absolute;left:99.5px;top:686.54px;font-size:19.8px;line-height:1em;color:#fff;white-space:pre;"><span class="cj">中心波长</span>:1546.924nm</div>
<div style="position:absolute;left:369.5px;top:686.54px;font-size:19.8px;line-height:1em;color:#fff;white-space:pre;"><span class="cj">波长范围</span>:20.0nm</div>
<div style="position:absolute;left:639.5px;top:686.54px;font-size:19.8px;line-height:1em;color:#fff;white-space:pre;"><span class="cj">起始波长</span>:1536.924nm</div>
<div style="position:absolute;left:909.5px;top:686.54px;font-size:19.8px;line-height:1em;color:#fff;white-space:pre;"><span class="cj">结束波长</span>:1556.924nm</div>
<div style="position:absolute;left:99.5px;top:726.54px;font-size:19.8px;line-height:1em;color:#fff;white-space:pre;"><span class="cj">分</span>&ensp;<span class="cj">辨</span>&ensp;<span class="cj">率</span>:0.10nm</div>
<div style="position:absolute;left:369.5px;top:726.54px;font-size:19.8px;line-height:1em;color:#fff;white-space:pre;"><span class="cj">灵</span>&ensp;<span class="cj">敏</span>&ensp;<span class="cj">度</span>:MID</div>
<div style="position:absolute;left:639.5px;top:726.54px;font-size:19.8px;line-height:1em;color:#fff;white-space:pre;"><span class="cj">采样点数</span>:1001(AUTO)</div>
<div style="position:absolute;left:909.5px;top:726.54px;font-size:19.8px;line-height:1em;color:#fff;white-space:pre;"><span class="cj">显示模式</span>:<span class="cj">对数</span>/<span class="cj">线性</span></div>
<div style="position:absolute;left:99.5px;top:766.54px;font-size:19.8px;line-height:1em;color:#fff;white-space:pre;"><span class="cj">参考能级</span>:0.0dBm</div>
<div style="position:absolute;left:369.5px;top:766.54px;font-size:19.8px;line-height:1em;color:#fff;white-space:pre;"><span class="cj">能级刻度</span>:10.0dB/DIV</div>
<div class="btn" style="top:10px;height:58px"></div>
<div class="btn" style="top:75px;height:83px"></div>
<div class="btn" style="top:165px;height:83px"></div>
<div class="btn" style="top:255px;height:83px"></div>
<div class="btn" style="top:345px;height:83px"></div>
<div class="btn" style="top:435px;height:83px"></div>
<div class="btn" style="top:525px;height:83px"></div>
<div class="btn" style="top:615px;height:83px"></div>
<div class="btn" style="top:705px;height:83px"></div>
<div style="position:absolute;left:1016px;width:400px;text-align:center;top:22.68px;font-size:15.5px;line-height:1em;color:#fff;white-space:pre;">2023<span class="hy">-</span>08<span class="hy">-</span>11</div>
<div style="position:absolute;left:1016px;width:400px;text-align:center;top:43.10px;font-size:15px;line-height:1em;color:#fff;white-space:pre;">16:07</div>
<div style="position:absolute;left:1016px;width:400px;text-align:center;top:111.59px;font-size:19.5px;line-height:1em;color:#fff;white-space:pre;">3dB</div>
<div style="position:absolute;left:1016px;width:400px;text-align:center;top:201.59px;font-size:19.5px;line-height:1em;color:#fff;white-space:pre;">6dB</div>
<div style="position:absolute;left:1016px;width:400px;text-align:center;top:291.59px;font-size:19.5px;line-height:1em;color:#fff;white-space:pre;">10dB</div>
<div style="position:absolute;left:1016px;width:400px;text-align:center;top:381.59px;font-size:19.5px;line-height:1em;color:#fff;white-space:pre;">20dB</div>
<div style="position:absolute;left:1016px;width:400px;text-align:center;top:456.67px;font-size:20px;line-height:1em;color:#fff;white-space:pre;">其他值</div>
<div style="position:absolute;left:1016px;width:400px;text-align:center;top:496.79px;font-size:19.5px;line-height:1em;color:#ffff00;white-space:pre;">6.00dB</div>
<div style="position:absolute;left:1016px;width:400px;text-align:center;top:741.17px;font-size:20px;line-height:1em;color:#fff;white-space:pre;">返回</div>
</body></html>
